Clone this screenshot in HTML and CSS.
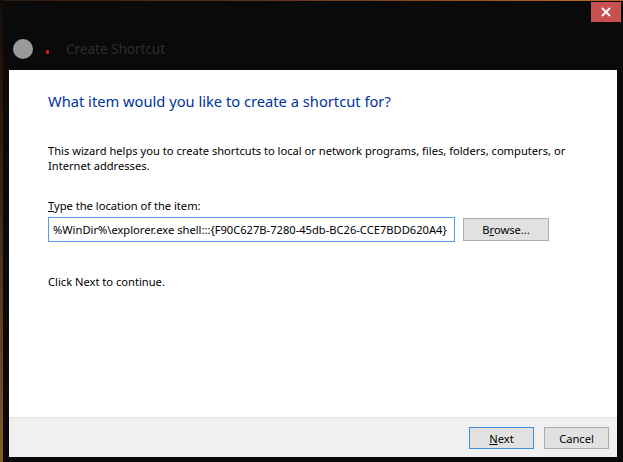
FILE: index.html
```html
<!DOCTYPE html>
<html>
<head>
<meta charset="utf-8">
<link rel="stylesheet" href="styles.css">
</head>
<body>
<div class="window">
  <div class="titlebar">
    <div class="title-left">
      <span class="app-icon"></span>
      <span class="mini-icon"></span>
      <span class="title">Create Shortcut</span>
    </div>
    <button class="close" type="button" aria-label="Close">
      <svg width="10" height="10" viewBox="0 0 10 10"><path d="M1 1 L9 9 M9 1 L1 9" stroke="#fff" stroke-width="1.8" fill="none"/></svg>
    </button>
  </div>
  <div class="content">
    <h1 class="heading">What item would you like to create a shortcut for?</h1>
    <p class="intro">This wizard helps you to create shortcuts to local or network programs, files, folders, computers, or Internet addresses.</p>
    <label class="label" for="loc"><u>T</u>ype the location of the item:</label>
    <div class="row">
      <div class="input" id="loc">%WinDir%\explorer.exe shell:::{F90C627B-7280-45db-BC26-CCE7BDD620A4}</div>
      <button class="btn" type="button">B<u>r</u>owse...</button>
    </div>
    <p class="hint">Click Next to continue.</p>
  </div>
  <div class="footer">
    <button class="btn btn-default" type="button"><u>N</u>ext</button>
    <button class="btn" type="button">Cancel</button>
  </div>
</div>
</body>
</html>
```

FILE: styles.css
```css
html, body {
  margin: 0;
  padding: 0;
  height: 100%;
}
body {
  background: linear-gradient(to bottom, #140c06 0%, #3a2210 40%, #8a5a2c 100%);
  font-family: "Noto Sans", "Open Sans", sans-serif;
  overflow: hidden;
}
.window {
  margin-left: 3px;
  height: 462px;
  box-sizing: border-box;
  background: #0a0a0a;
  border-image: linear-gradient(to right, #2a1a10, #6b3a18 50%, #c06a28) 1;
  border-width: 1px 0 0 0;
  border-style: solid;
  padding: 0 6px 5px 6px;
  display: flex;
  flex-direction: column;
}
.titlebar {
  height: 69px;
  display: flex;
  align-items: flex-start;
  justify-content: space-between;
  margin-right: -4px;
}
.title-left {
  display: flex;
  align-items: center;
  margin-top: 38px;
  margin-left: 4px;
}
.app-icon {
  width: 20px;
  height: 20px;
  border-radius: 50%;
  background: #9a9a9a;
}
.mini-icon {
  width: 3px;
  height: 4px;
  background: #d01818;
  margin-left: 13px;
  margin-top: 6px;
}
.title {
  margin-left: 17px;
  font-size: 13.5px;
  color: #2e2e2e;
}
.close {
  margin-top: 1px;
  width: 30px;
  height: 20px;
  border: none;
  padding: 0;
  background: #c75050;
  display: flex;
  align-items: center;
  justify-content: center;
}
.content {
  flex: 1;
  background: #fff;
  padding: 0 39px;
  display: flex;
  flex-direction: column;
}
.heading {
  margin: 20px 0 0 0;
  font-weight: normal;
  font-size: 14.7px;
  line-height: 22px;
  color: #0033a0;
}
.intro {
  margin: 31px 0 0 0;
  font-size: 11.15px;
  line-height: 15px;
  color: #000;
  max-width: 530px;
}
.label {
  margin-top: 25px;
  font-size: 11.15px;
  line-height: 15px;
  color: #000;
}
.row {
  display: flex;
  align-items: center;
  margin-top: 4px;
}
.input {
  width: 401px;
  height: 23px;
  box-sizing: content-box;
  border: 1px solid #569de5;
  font-size: 11.15px;
  line-height: 23px;
  padding-left: 4px;
  white-space: nowrap;
  overflow: hidden;
  color: #000;
}
.btn {
  font-family: "Noto Sans", "Open Sans", sans-serif;
  font-size: 11.15px;
  color: #000;
  background: #e1e1e1;
  border: 1px solid #adadad;
  height: 23px;
  width: 86px;
  padding: 0;
  line-height: 21px;
}
.row .btn {
  margin-left: 8px;
}
.hint {
  margin: 32px 0 0 0;
  font-size: 11.15px;
  line-height: 15px;
  color: #000;
}
.footer {
  height: 39px;
  background: #f0f0f0;
  border-top: 1px solid #dfdfdf;
  display: flex;
  align-items: center;
  justify-content: flex-end;
  gap: 10px;
  padding-right: 8px;
}
.footer .btn {
  width: 65px;
  height: 22px;
}
.btn-default {
  border-color: #3c90e0;
}
```
